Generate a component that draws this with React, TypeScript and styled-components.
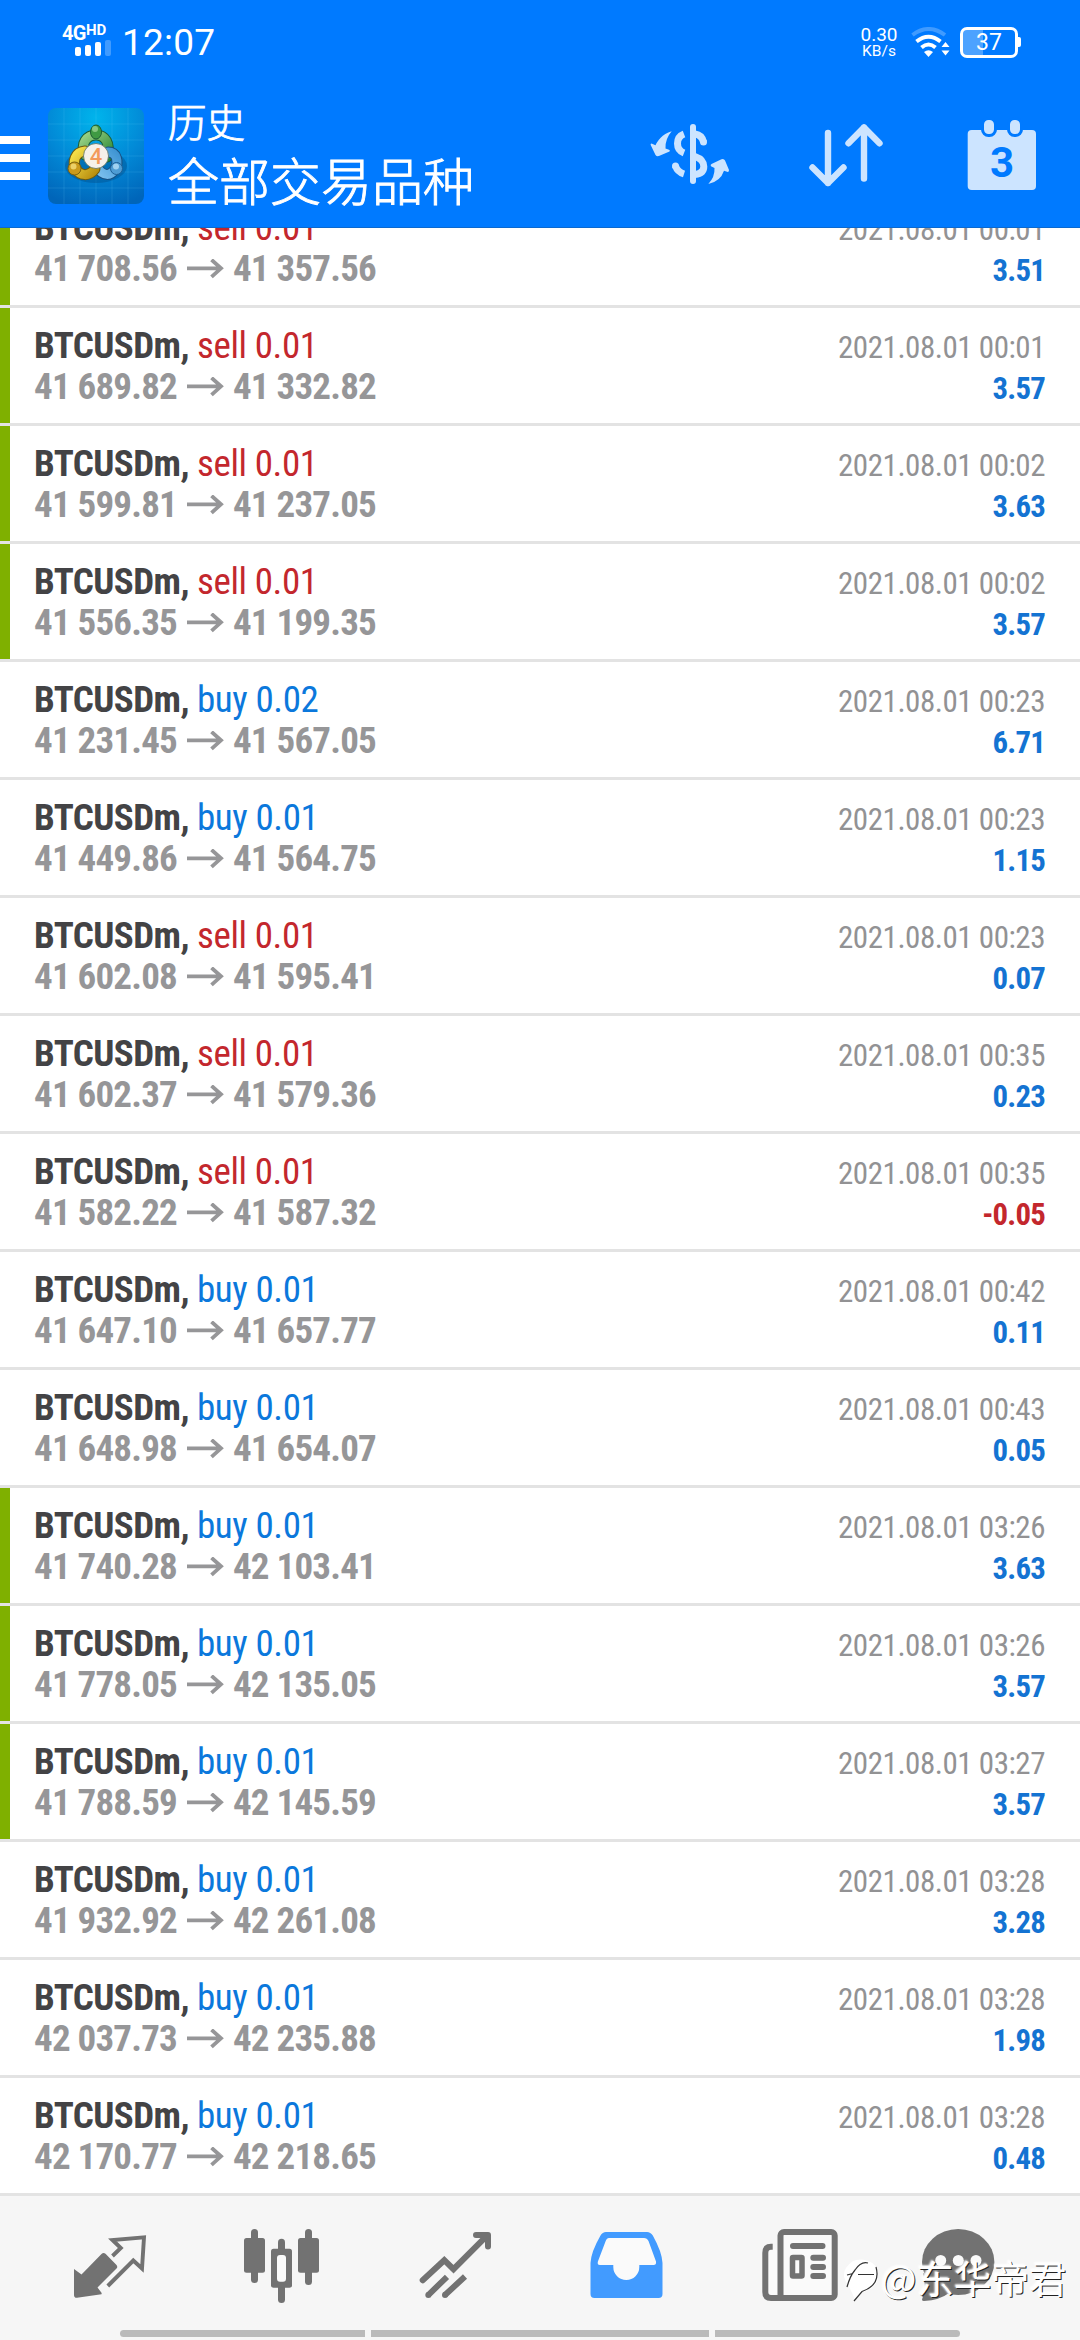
import React from 'react';
import styled, { createGlobalStyle } from 'styled-components';

const GlobalStyle = createGlobalStyle`
  *, *::before, *::after { box-sizing: border-box; }
  body { margin: 0; background: #fff; }
  svg { display: block; flex: none; }
`;

const BLUE = '#007aff';
const ICON_TINT = '#cce4ff';
const GREY = '#727272';

const Screen = styled.div`
  width: 1080px;
  height: 2340px;
  display: flex;
  flex-direction: column;
  overflow: hidden;
  position: relative;
  background: #fff;
  font-family: Roboto, 'Noto Sans CJK SC', sans-serif;
`;

const Header = styled.header`
  flex: none;
  height: 228px;
  background: ${BLUE};
  border-bottom: 1px solid #0b69cf;
  color: #fff;
`;

const StatusBar = styled.div`
  height: 84px;
  padding: 25px 59px 0 62px;
  display: flex;
  align-items: flex-start;
`;

const Carrier = styled.div`
  width: 50px;
  font-size: 20px;
  line-height: 16px;
  font-weight: 700;
  letter-spacing: -0.6px;
  display: flex;
  flex-wrap: wrap;
  align-items: flex-start;
`;

const HdMark = styled.span`
  font-size: 15px;
  line-height: 11px;
  letter-spacing: 0;
`;

const SignalBars = styled.div`
  width: 100%;
  height: 16px;
  margin-top: -1px;
  padding-left: 13px;
  display: flex;
  gap: 4px;
  align-items: flex-end;
`;

const SignalBar = styled.i<{ $h: number; $dim?: boolean }>`
  width: 6px;
  height: ${p => p.$h}px;
  border-radius: 2px;
  background: #fff;
  opacity: ${p => (p.$dim ? 0.25 : 1)};
`;

const Clock = styled.div`
  margin-left: 10px;
  font-size: 37px;
  line-height: 36px;
  letter-spacing: 0.2px;
`;

const NetSpeed = styled.div`
  margin-left: auto;
  width: 38px;
  text-align: center;
  font-size: 19px;
  line-height: 19px;
  white-space: nowrap;
`;

const NetUnit = styled.div`
  font-size: 15.5px;
  line-height: 14px;
`;

const WifiIcon = styled.svg`
  margin: 2px 10px 0 13px;
`;

const Battery = styled.div`
  width: 58px;
  height: 31px;
  margin: 2px 0 0;
  border: 3px solid #fff;
  border-radius: 7px;
  background: linear-gradient(90deg, #4ca2ff 0 20px, transparent 20px);
  font-size: 23px;
  line-height: 26px;
  text-align: center;
`;

const BatteryNub = styled.i`
  width: 3px;
  height: 10px;
  margin-top: 12px;
  border-radius: 0 2px 2px 0;
  background: #fff;
`;

const AppBar = styled.div`
  height: 144px;
  padding-right: 30px;
  display: flex;
  align-items: center;
`;

const MenuButton = styled.div`
  width: 30px;
  margin: 4px 18px 0 0;
  display: flex;
  flex-direction: column;
  gap: 10px;
`;

const MenuLine = styled.i`
  height: 8px;
  background: #fff;
`;

const Titles = styled.div`
  margin-left: 24px;
  flex: 1;
  font-weight: 300;
  -webkit-text-stroke: 0.9px #fff;
`;

const Subtitle = styled.div`
  font-size: 38.5px;
  line-height: 50px;
  margin: 3px 0 2px;
`;

const Title = styled.div`
  font-size: 51px;
  line-height: 66px;
`;

const Actions = styled.div`
  display: flex;
  gap: 60px;
`;

const List = styled.main`
  flex: none;
  height: 1968px;
  display: flex;
  flex-direction: column;
  justify-content: flex-end;
  overflow: hidden;
  font-family: 'Roboto Condensed', Roboto, sans-serif;
`;

const Row = styled.div<{ $marked: boolean }>`
  flex: none;
  height: 118px;
  padding: 17px 35px 0 34px;
  border-bottom: 3px solid #e3e3e3;
  background: linear-gradient(90deg, ${p => (p.$marked ? '#7fb000' : '#fff')} 0 10px, #fff 10px);
  background-clip: padding-box;
`;

const Line = styled.div`
  height: 41px;
  display: flex;
  align-items: baseline;
  font-size: 37px;
  line-height: 41px;
  letter-spacing: -0.55px;
  white-space: nowrap;
`;

const SymbolName = styled.span`
  font-weight: 700;
  color: #434345;
  margin-right: 8px;
`;

const Side = styled.span<{ $side: 'buy' | 'sell' }>`
  color: ${p => (p.$side === 'buy' ? '#0b78dc' : '#c3272d')};
  letter-spacing: -0.4px;
`;

const Price = styled.span`
  font-weight: 700;
  color: #969698;
  letter-spacing: -0.8px;
`;

const Arrow = styled.svg`
  margin: 0 9px 0 10px;
  align-self: center;
`;

const Time = styled.span`
  margin-left: auto;
  font-size: 31px;
  letter-spacing: -0.46px;
  color: #929294;
`;

const Profit = styled.span<{ $loss: boolean }>`
  margin-left: auto;
  font-size: 30.8px;
  font-weight: 700;
  letter-spacing: -0.8px;
  color: ${p => (p.$loss ? '#c3272d' : '#1473d2')};
`;

const TabBar = styled.nav`
  flex: none;
  height: 144px;
  background: #f6f6f6;
`;

const Tabs = styled.div`
  height: 134px;
  padding: 19px 0 0 62px;
  display: flex;
  gap: 76px;
`;

const Gesture = styled.div`
  height: 7px;
  padding-left: 120px;
  display: flex;
  gap: 6px;
`;

const GestureBar = styled.i<{ $w: number; $radius: string }>`
  width: ${p => p.$w}px;
  background: #bababa;
  border-radius: ${p => p.$radius};
`;

const Watermark = styled.div`
  position: absolute;
  left: 844px;
  top: 2252px;
  display: flex;
  align-items: center;
  font-family: 'Noto Sans CJK SC', sans-serif;
  font-size: 37.5px;
  line-height: 50px;
  font-weight: 400;
  color: #fff;
  text-shadow: 1px 1px 0 #222, -1px -1px 2px #fff;
  white-space: nowrap;
`;

type Trade = {
  side: 'buy' | 'sell';
  lot: string;
  open: string;
  close: string;
  time: string;
  profit: string;
  marked?: boolean;
};

const t = (side: 'buy' | 'sell', lot: string, open: string, close: string, time: string, profit: string, marked = false): Trade =>
  ({ side, lot, open, close, time, profit, marked });

const trades: Trade[] = [
  t('sell', '0.01', '41 708.56', '41 357.56', '00:01', '3.51', true),
  t('sell', '0.01', '41 689.82', '41 332.82', '00:01', '3.57', true),
  t('sell', '0.01', '41 599.81', '41 237.05', '00:02', '3.63', true),
  t('sell', '0.01', '41 556.35', '41 199.35', '00:02', '3.57', true),
  t('buy', '0.02', '41 231.45', '41 567.05', '00:23', '6.71'),
  t('buy', '0.01', '41 449.86', '41 564.75', '00:23', '1.15'),
  t('sell', '0.01', '41 602.08', '41 595.41', '00:23', '0.07'),
  t('sell', '0.01', '41 602.37', '41 579.36', '00:35', '0.23'),
  t('sell', '0.01', '41 582.22', '41 587.32', '00:35', '-0.05'),
  t('buy', '0.01', '41 647.10', '41 657.77', '00:42', '0.11'),
  t('buy', '0.01', '41 648.98', '41 654.07', '00:43', '0.05'),
  t('buy', '0.01', '41 740.28', '42 103.41', '03:26', '3.63', true),
  t('buy', '0.01', '41 778.05', '42 135.05', '03:26', '3.57', true),
  t('buy', '0.01', '41 788.59', '42 145.59', '03:27', '3.57', true),
  t('buy', '0.01', '41 932.92', '42 261.08', '03:28', '3.28'),
  t('buy', '0.01', '42 037.73', '42 235.88', '03:28', '1.98'),
  t('buy', '0.01', '42 170.77', '42 218.65', '03:28', '0.48'),
];

const Logo = () => (
  <svg width="96" height="96" viewBox="0 0 96 96">
    <defs>
      <radialGradient id="sky" cx="0.5" cy="0.1" r="0.95">
        <stop offset="0" stopColor="#00b4ec" />
        <stop offset="0.55" stopColor="#0288d6" />
        <stop offset="1" stopColor="#0065b9" />
      </radialGradient>
      <linearGradient id="green" x1="0" y1="0" x2="1" y2="1">
        <stop offset="0" stopColor="#9bd287" />
        <stop offset="1" stopColor="#2d8a35" />
      </linearGradient>
      <linearGradient id="yellow" x1="0" y1="0" x2="1" y2="1">
        <stop offset="0" stopColor="#f7e24a" />
        <stop offset="1" stopColor="#b98f10" />
      </linearGradient>
      <linearGradient id="blue" x1="1" y1="0" x2="0" y2="1">
        <stop offset="0" stopColor="#3f95d3" />
        <stop offset="1" stopColor="#7cc0ee" />
      </linearGradient>
    </defs>
    <rect width="96" height="96" rx="8" fill="url(#sky)" />
    <path d="M0 16H96M0 32H96M0 48H96M0 64H96M0 80H96M16 0V96M32 0V96M48 0V96M64 0V96M80 0V96" stroke="#7fd8ff" strokeOpacity="0.15" />
    <ellipse cx="48" cy="58" rx="31" ry="17" fill="#004a86" opacity="0.4" />
    <g fill="none" strokeLinecap="round">
      <path d="M37 47C32 35 39 27 48 27S63 35 59 49" stroke="#1d5c33" strokeWidth="11" />
      <path d="M37 47C32 35 39 27 48 27S63 35 59 49" stroke="url(#green)" strokeWidth="9" />
      <path d="M60 44C69 44 71 54 67 61S55 69 49 59" stroke="#184f80" strokeWidth="11" />
      <path d="M60 44C69 44 71 54 67 61S55 69 49 59" stroke="url(#blue)" strokeWidth="9" />
      <path d="M37 43C27 44 24 54 28 61S41 69 47 61" stroke="#6d5a10" strokeWidth="11" />
      <path d="M37 43C27 44 24 54 28 61S41 69 47 61" stroke="url(#yellow)" strokeWidth="9" />
    </g>
    <ellipse cx="48" cy="24" rx="5.5" ry="7" fill="#3f9a43" stroke="#1d5c33" />
    <ellipse cx="47" cy="21" rx="3" ry="3" fill="#9ad291" opacity="0.8" />
    <circle cx="26.5" cy="60.5" r="6.5" fill="#c99a1c" stroke="#7b6210" />
    <circle cx="25.5" cy="58.5" r="3" fill="#f5df7c" opacity="0.8" />
    <circle cx="68.5" cy="60.5" r="6" fill="#4e9cd4" stroke="#1d5f96" />
    <circle cx="68" cy="58.5" r="3" fill="#b5def7" opacity="0.8" />
    <circle cx="48" cy="48" r="12.5" fill="#f6f1ea" stroke="#5c7060" strokeWidth="0.8" />
    <text x="48" y="56" textAnchor="middle" fontFamily="Roboto, sans-serif" fontSize="22" fontWeight="500" fill="#f39a5b">4</text>
  </svg>
);

const CurrencyIcon = () => (
  <svg width="96" height="96" viewBox="0 0 96 96" fill={ICON_TINT}>
    <rect x="48" y="16" width="6" height="60" rx="3" />
    <g fill="none" stroke={ICON_TINT} strokeWidth="7">
      <path d="M42 26Q35.5 28.500 35.500 35.500T42 45" />
      <path d="M53 26Q60 27 61.500 34" />
      <path d="M53 48.500Q61.800 51.500 61.800 58.500T53 66.500" />
      <path d="M33.500 58Q35.500 64 42 66" />
    </g>
    <circle cx="61.500" cy="34" r="3.500" />
    <circle cx="33.500" cy="58" r="3.500" />
    <path d="M29.700 23.300C20 26 15.500 33 13.500 37.300L9.500 35.500Q8.300 35.500 8.700 37L13.500 47Q15 49 17.500 47.800L27.500 43.500Q28.500 42.500 27 41.700L23.500 40.500Q23 31 29.700 23.300Z" />
    <path d="M66.300 76Q73 69 72.500 60L69 58.300Q68 57 69.500 56L79.500 51.300Q82 50.500 83 52.600L87 62Q87 64 85.800 64L82 62.800Q78.500 73.500 66.300 76Z" />
  </svg>
);

const SortIcon = () => (
  <svg width="96" height="96" viewBox="0 0 96 96" fill="none" stroke={ICON_TINT} strokeWidth="6.4" strokeLinecap="round" strokeLinejoin="round">
    <path d="M30 25V75M14.5 59.500 30 75 45.500 59.500" />
    <path d="M66 70.500V19.500M50.500 35.300 66 19.500 81.500 35.300" />
  </svg>
);

const CalendarIcon = () => (
  <svg width="96" height="96" viewBox="0 0 96 96" fill={ICON_TINT}>
    <rect x="13.7" y="22" width="68.3" height="60" rx="4" />
    <g stroke={BLUE} strokeWidth="3">
      <rect x="28.5" y="10.5" width="13" height="17" rx="6" />
      <rect x="54.5" y="10.5" width="13" height="17" rx="6" />
    </g>
    <text x="48" y="69" textAnchor="middle" fontFamily="Roboto, sans-serif" fontSize="42" fontWeight="700" fill={BLUE}>3</text>
  </svg>
);

const QuotesIcon = () => (
  <svg width="96" height="96" viewBox="0 0 96 96" fill={GREY}>
    <path d="M12 54 19.500 59.500 39.500 39Q41.500 37 43.500 38.800L54.500 50Q56 52 54.500 53.500L35.500 72.500 39.700 78 39.500 79.200 15 82.800Q12 83 12 80Z" />
    <path d="M50.500 41 58.800 33 50.500 25 82 22.300 80 53.500 71.300 45.500 45.800 71" fill="none" stroke={GREY} strokeWidth="3.9" />
  </svg>
);

const ChartIcon = () => (
  <svg width="96" height="96" viewBox="0 0 96 96" fill={GREY}>
    <rect x="17" y="14" width="7" height="54" rx="3.5" />
    <rect x="10" y="23" width="21" height="34.7" rx="2.5" />
    <rect x="71" y="14" width="7" height="56" rx="3.5" />
    <rect x="64" y="23" width="21" height="34.7" rx="2.5" />
    <rect x="44" y="23.7" width="7" height="64.3" rx="3.5" />
    <rect x="37" y="33.7" width="21" height="39" rx="2.5" />
    <rect x="43" y="40" width="9" height="26.7" rx="3" fill="#fafafa" />
  </svg>
);

const TradeIcon = () => (
  <svg width="96" height="96" viewBox="3 0 96 96" fill="none" stroke={GREY} strokeWidth="6">
    <g transform="translate(1 0)">
      <g strokeLinecap="round" strokeLinejoin="round">
        <path d="M18.700 65.300 40.300 45.200 49.500 54.200 83 20.700" strokeLinejoin="miter" />
        <path d="M72 20H84V31.500" />
      </g>
      <path d="M24 80.300 43 61.800M40.700 80.300 61 61.500" />
      <circle cx="24.3" cy="80" r="3" fill={GREY} stroke="none" />
      <circle cx="41" cy="80" r="3" fill={GREY} stroke="none" />
    </g>
  </svg>
);

const HistoryIcon = () => (
  <svg width="96" height="96" viewBox="0 0 96 96">
    <path fill="#429bff" d="M28 17H69Q72.500 17 74.800 20.500Q84 37 84.500 48V79Q84.500 83 80.500 83H16.500Q12.500 83 12.500 79V48Q13 37 22.500 20.500Q24.500 17 28 17Z" />
    <path fill="#fafafa" d="M31 23H66Q69 23 70.500 26L78 46.500Q78.500 50 75.500 50H61.300V52A13 13 0 0 1 35.300 52V50H22Q19 50 19.900 46.500L27.500 26.500Q28.500 23 31 23Z" />
  </svg>
);

const NewsIcon = () => (
  <svg width="96" height="96" viewBox="0 0 96 96" fill="none" stroke={GREY} strokeWidth="6">
    <rect x="18" y="34" width="9" height="46" rx="3" fill="#fafafa" stroke="none" />
    <path d="M22.700 31.700H21Q15.300 31.700 15.300 38V77Q15.300 83 21 83H60" />
    <rect x="30.5" y="17" width="54.2" height="66" rx="3.5" fill="#fafafa" />
    <path d="M43 31H72.500M63.300 42.800H73M63.300 51.900H73M63.300 61H73" strokeLinecap="round" />
    <rect x="42.5" y="42.5" width="9.5" height="18.5" rx="0.5" strokeWidth="5.5" strokeLinejoin="round" />
  </svg>
);

const ChatIcon = () => (
  <svg width="96" height="96" viewBox="0 0 96 96" fill={GREY}>
    <ellipse cx="36.2" cy="47" rx="36.2" ry="33" />
    <path d="M1 58Q5 74 0 84.500Q0 86 2 86Q18 85 27 78Z" />
    <g fill="#fafafa">
      <circle cx="18.7" cy="45.5" r="5.5" />
      <circle cx="36.3" cy="45.5" r="5.5" />
      <circle cx="54" cy="45.5" r="5.5" />
    </g>
  </svg>
);

const LeafMark = () => (
  <svg width="37" height="50" viewBox="0 0 37 50">
    <path d="M2 16Q10 4 24 9Q34 12 34 24T18 40L11 48Q8 40 4 33Q-3 24 2 16Z" fill="#fff" />
    <g fill="none" stroke="#333" strokeWidth="1.2">
      <path d="M3 35Q6 24 11 18Q17 9 24 11M3 23 9 21.500M14 22.500H30" />
      <path d="M32 15Q37 33 18 39.500L10 49" />
    </g>
  </svg>
);

export default function App() {
  return (
    <Screen>
      <GlobalStyle />
      <Header>
        <StatusBar>
          <Carrier>
            4G<HdMark>HD</HdMark>
            <SignalBars>
              <SignalBar $h={9} />
              <SignalBar $h={11} />
              <SignalBar $h={14} />
              <SignalBar $h={16} $dim />
            </SignalBars>
          </Carrier>
          <Clock>12:07</Clock>
          <NetSpeed>
            0.30
            <NetUnit>KB/s</NetUnit>
          </NetSpeed>
          <WifiIcon width="39" height="30" viewBox="0 0 39 30" fill="none" stroke="#fff" strokeWidth="4">
            <path d="M1.500 8Q17.500-4 34 8" opacity="0.25" />
            <path d="M5.500 14.500Q17.500 5 29.500 14.500" />
            <path d="M10.500 20.500Q17.500 14.500 24.500 20.500" />
            <path d="M13 25Q17.500 21.500 22 25L17.500 30Z" fill="#fff" stroke="none" />
            <path d="M34.500 15 38.500 20H30.500ZM34.500 28.500 38.500 23.500H30.500Z" fill="#fff" stroke="none" />
          </WifiIcon>
          <Battery>37</Battery>
          <BatteryNub />
        </StatusBar>
        <AppBar>
          <MenuButton>
            <MenuLine />
            <MenuLine />
            <MenuLine />
          </MenuButton>
          <Logo />
          <Titles>
            <Subtitle>历史</Subtitle>
            <Title>全部交易品种</Title>
          </Titles>
          <Actions>
            <CurrencyIcon />
            <SortIcon />
            <CalendarIcon />
          </Actions>
        </AppBar>
      </Header>
      <List>
        {trades.map((d, i) => (
          <Row key={i} $marked={!!d.marked}>
            <Line>
              <SymbolName>BTCUSDm,</SymbolName>
              <Side $side={d.side}>{d.side} {d.lot}</Side>
              <Time>2021.08.01 {d.time}</Time>
            </Line>
            <Line>
              <Price>{d.open}</Price>
              <Arrow width="37" height="20" viewBox="0 0 37 20" fill="none" stroke="#969698" strokeWidth="3.8">
                <path d="M0 9.300H34M24.500 0.800 34 9.300 24.500 17.800" />
              </Arrow>
              <Price>{d.close}</Price>
              <Profit $loss={d.profit.startsWith('-')}>{d.profit}</Profit>
            </Line>
          </Row>
        ))}
      </List>
      <TabBar>
        <Tabs>
          <QuotesIcon />
          <ChartIcon />
          <TradeIcon />
          <HistoryIcon />
          <NewsIcon />
          <ChatIcon />
        </Tabs>
        <Gesture>
          <GestureBar $w={245} $radius="4px 0 0 4px" />
          <GestureBar $w={338} $radius="0" />
          <GestureBar $w={245} $radius="0 4px 4px 0" />
        </Gesture>
      </TabBar>
      <Watermark>
        <LeafMark />
        @东华帝君
      </Watermark>
    </Screen>
  );
}
